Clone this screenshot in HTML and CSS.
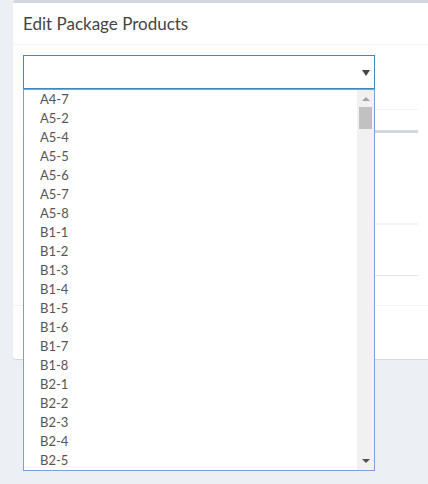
FILE: index.html
```html
<!DOCTYPE html>
<html>
<head>
<meta charset="utf-8">
<link rel="stylesheet" href="styles.css">
</head>
<body>
<div class="page">
  <div class="box">
    <div class="box-header"><h3 class="box-title">Edit Package Products</h3></div>
    <div class="box-body">
      <div class="select-wrap">
        <div class="select">
          <span class="caret"></span>
        </div>
        <div class="dropdown">
          <ul class="options">
            <li>A4-7</li><li>A5-2</li><li>A5-4</li><li>A5-5</li><li>A5-6</li><li>A5-7</li><li>A5-8</li>
            <li>B1-1</li><li>B1-2</li><li>B1-3</li><li>B1-4</li><li>B1-5</li><li>B1-6</li><li>B1-7</li><li>B1-8</li>
            <li>B2-1</li><li>B2-2</li><li>B2-3</li><li>B2-4</li><li>B2-5</li>
          </ul>
          <div class="scrollbar">
            <span class="sb-up"></span>
            <span class="sb-thumb"></span>
            <span class="sb-fill"></span>
            <span class="sb-down"></span>
          </div>
        </div>
      </div>
      <div class="spacer"></div>
      <div class="inner-box">
        <div class="inner-body"></div>
        <div class="inner-footer"></div>
      </div>
    </div>
    <div class="box-footer"></div>
  </div>
</div>
</body>
</html>
```
FILE: styles.css
```css
html, body {
  margin: 0;
  padding: 0;
  background: #ecf0f5;
  overflow: hidden;
  font-family: "Lato", "Liberation Sans", sans-serif;
}
.page {
  padding-left: 13px;
  height: 484px;
}
.box {
  background: #fff;
  border-top: 3px solid #d2d6de;
  border-radius: 3px 0 0 3px;
  box-shadow: 0 1px 1px rgba(0,0,0,0.1);
}
.box-header {
  padding: 10px;
  border-bottom: 1px solid #f4f4f4;
}
.box-title {
  margin: 0;
  font-size: 17px;
  line-height: 21px;
  font-weight: 400;
  color: #444;
}
.box-body {
  padding: 10px;
}
.select-wrap {
  position: relative;
  width: 352px;
}
.select {
  height: 32px;
  border: 1px solid #3c8dbc;
  background: #fff;
  position: relative;
}
.caret {
  position: absolute;
  right: 4px;
  top: 14px;
  width: 0;
  height: 0;
  border-left: 4px solid transparent;
  border-right: 4px solid transparent;
  border-top: 6px solid #444;
}
.dropdown {
  position: absolute;
  left: 0;
  top: 34px;
  width: 350px;
  height: 380px;
  border: 1px solid #7d9fd8;
  background: #fff;
  display: flex;
  z-index: 5;
}
.options {
  list-style: none;
  margin: 0;
  padding: 0;
  flex: 1;
}
.options li {
  height: 19px;
  line-height: 19px;
  padding-left: 16px;
  font-size: 13px;
  color: #555;
}
.scrollbar {
  width: 17px;
  background: #f1f1f1;
  display: flex;
  flex-direction: column;
  align-items: center;
}
.sb-up {
  margin-top: 7px;
  width: 0;
  height: 0;
  border-left: 4px solid transparent;
  border-right: 4px solid transparent;
  border-bottom: 4px solid #a3a3a3;
}
.sb-thumb {
  margin-top: 6px;
  width: 13px;
  height: 22px;
  background: #c1c1c1;
}
.sb-fill {
  flex: 1;
}
.sb-down {
  margin-bottom: 7px;
  width: 0;
  height: 0;
  border-left: 4px solid transparent;
  border-right: 4px solid transparent;
  border-top: 4px solid #505050;
}
.spacer {
  height: 20px;
  border-bottom: 1px solid #f4f4f4;
  margin-bottom: 20px;
}
.inner-box {
  border-top: 3px solid #d2d6de;
  box-shadow: 0 1px 1px rgba(0,0,0,0.1);
  margin-bottom: 20px;
  border-radius: 3px 0 0 3px;
}
.inner-body {
  height: 90px;
}
.inner-footer {
  height: 50px;
  border-top: 2px solid #f4f4f4;
}
.box-footer {
  height: 53px;
  border-top: 1px solid #f4f4f4;
}
```
